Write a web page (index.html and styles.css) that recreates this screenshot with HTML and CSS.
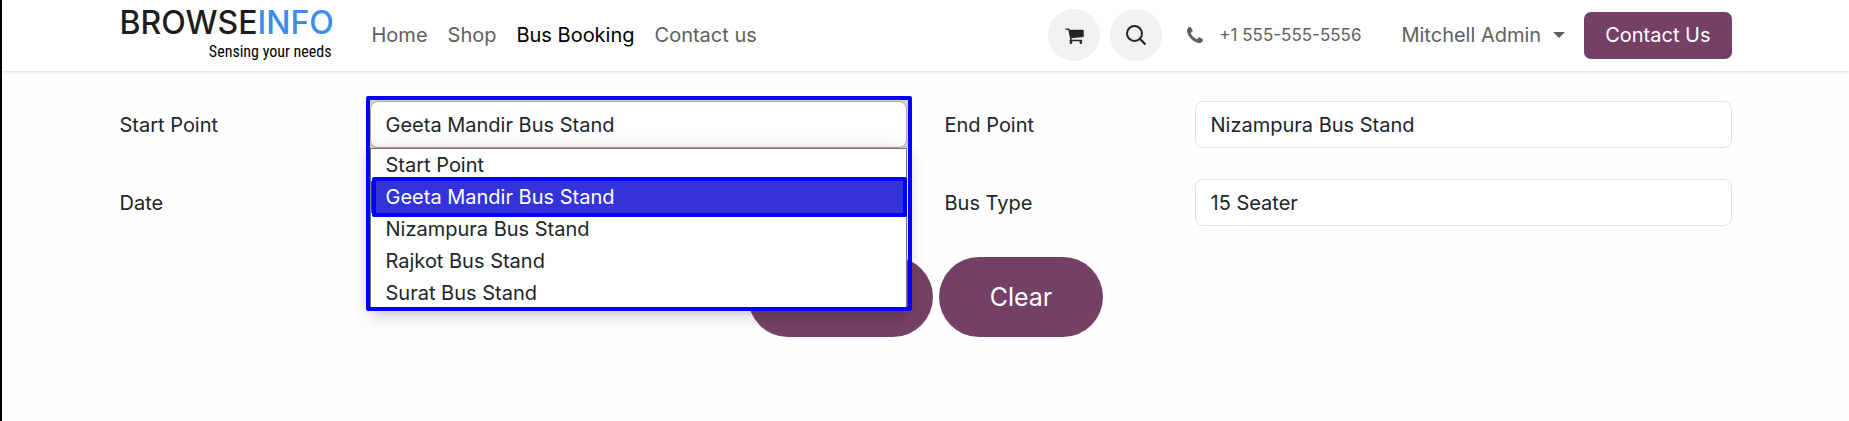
FILE: index.html
```html
<!DOCTYPE html>
<html lang="en">
<head>
<meta charset="utf-8">
<title>Bus Booking</title>
<meta name="viewport" content="width=device-width, initial-scale=1">
<link rel="stylesheet" href="styles.css">
</head>
<body class="page">
<header class="header">
  <div class="container header-row">
    <a class="logo" href="#">
      <span class="logo-name">BROWSE<span class="logo-accent">INFO</span></span>
      <span class="logo-tagline">Sensing your needs</span>
    </a>
    <nav class="nav">
      <a class="nav-link" href="#">Home</a>
      <a class="nav-link" href="#">Shop</a>
      <a class="nav-link active" href="#">Bus Booking</a>
      <a class="nav-link" href="#">Contact us</a>
    </nav>
    <div class="actions">
      <a class="round" href="#" aria-label="Cart">
        <svg class="icon-cart" viewBox="0 0 1664 1536"><path fill="currentColor" d="M640 1408a128 128 0 1 1-256 0a128 128 0 0 1 256 0zm896 0a128 128 0 1 1-256 0a128 128 0 0 1 256 0zm128-1088v512q0 24-16.500 42.500T1607 896L563 1018q13 60 13 70q0 16-24 64h920q26 0 45 19t19 45t-19 45t-45 19H448q-26 0-45-19t-19-45q0-11 8-31.500t16-36t21.500-40T445 1079L268 256H64q-26 0-45-19T0 192t19-45t45-19h256q16 0 28.500 6.500T368 150t13 24.500t8 26t5.500 29.500t4.500 26h1201q26 0 45 19t19 45z"/></svg>
      </a>
      <button class="round" type="button" aria-label="Search">
        <svg class="icon-search" viewBox="0 0 20 20" fill="none" stroke="currentColor" stroke-width="2"><circle cx="8.500" cy="8.500" r="7.500"/><path d="M13.500 13.500 19.500 19.500" stroke-width="2.200"/></svg>
      </button>
      <a class="phone" href="tel:+15555555556">
        <svg class="icon-phone" viewBox="0 0 1408 1408"><path fill="currentColor" d="M1408 1112q0 27-10 70.500t-21 68.500q-21 50-122 106q-94 51-186 51q-27 0-53-3.500t-57.500-12.500t-47-14.500t-55.500-20.500t-49-18q-98-35-175-83q-127-79-264-216T152 776q-48-77-83-175q-3-9-18-49t-20.500-55.500t-14.500-47T3.500 392T0 339q0-92 51-186Q107 52 157 31q25-11 68.500-21T296 0q14 0 21 3q18 6 53 76q11 19 30 54t35 63.500t31 53.500q3 4 17.500 25t21.500 35.500t7 28.500q0 20-28.500 50t-62 55t-62 53t-28.500 46q0 9 5 22.500t8.500 20.500t14 24t11.500 19q76 137 174 235t235 174q2 1 19 11.500t24 14t20.500 8.500t22.500 5q18 0 46-28.500t53-62t55-62t50-28.500q14 0 28.500 7t35.500 21.500t25 17.500q25 15 53.500 31t63.500 35t54 30q70 35 76 53q3 7 3 21z"/></svg>
        <span>+1 555-555-5556</span>
      </a>
      <button class="user" type="button">Mitchell Admin<span class="caret"></span></button>
      <a class="contact" href="#">Contact Us</a>
    </div>
  </div>
</header>
<main class="container">
  <form class="form">
    <div class="field">
      <label class="label" for="start">Start Point</label>
      <div class="combo">
        <select class="select focused" id="start"><option>Geeta Mandir Bus Stand</option></select>
        <div class="menu" role="listbox" aria-label="Start Point">
          <div class="option" role="option">Start Point</div>
          <div class="option selected" role="option" aria-selected="true">Geeta Mandir Bus Stand</div>
          <div class="option" role="option">Nizampura Bus Stand</div>
          <div class="option" role="option">Rajkot Bus Stand</div>
          <div class="option" role="option">Surat Bus Stand</div>
        </div>
      </div>
    </div>
    <div class="field">
      <label class="label" for="end">End Point</label>
      <select class="select" id="end"><option>Nizampura Bus Stand</option></select>
    </div>
    <div class="field">
      <label class="label" for="date">Date</label>
      <input class="select" id="date" type="text">
    </div>
    <div class="field">
      <label class="label" for="type">Bus Type</label>
      <select class="select" id="type"><option>15 Seater</option></select>
    </div>
    <div class="buttons">
      <button class="pill" type="button">Search</button>
      <button class="pill" type="button">Clear</button>
    </div>
  </form>
</main>
</body>
</html>
```
FILE: styles.css
```css
* { box-sizing: border-box; }

.page {
  margin: 0;
  min-height: 100vh;
  border-left: 2px solid #000;
  background: #fefefe;
  color: #212529;
  font: 20px/30px Inter, "Liberation Sans", sans-serif;
}

.container {
  width: 100%;
  max-width: 1650px;
  margin: 0 auto;
  padding: 0 19px;
}

.header {
  background: #fff;
  box-shadow: 0 1px 3px rgba(0, 0, 0, 0.14);
}

.header-row {
  display: flex;
  align-items: center;
  height: 71px;
  padding-bottom: 1px;
}

.logo {
  display: flex;
  flex-direction: column;
  width: 212px;
  color: #1d1d1b;
  text-decoration: none;
}

.logo-name {
  font-size: 32px;
  font-weight: 500;
  line-height: 34px;
}

.logo-accent { color: #3a8dea; }

.logo-tagline {
  align-self: flex-end;
  color: #000;
  font: 400 16px/24px "Roboto Condensed", "Open Sans Condensed Light", "Open Sans Condensed", "Liberation Sans", sans-serif;
}

.nav {
  display: flex;
  gap: 20px;
  margin-left: 40px;
}

.nav-link {
  color: #5f5f5f;
  text-decoration: none;
}

.nav-link.active { color: #000; }

.actions {
  display: flex;
  align-items: center;
  margin-left: auto;
}

.round {
  display: flex;
  align-items: center;
  justify-content: center;
  width: 52px;
  height: 52px;
  margin-right: 10px;
  padding: 0;
  border: 0;
  border-radius: 50%;
  background: #f1f1f1;
  color: #212529;
}

.icon-cart { width: 19px; height: 17px; }
.icon-search { width: 20px; height: 20px; }
.icon-phone { width: 16px; height: 16px; }

.phone {
  display: flex;
  align-items: center;
  gap: 16px;
  margin: 0 40px 0 15px;
  color: #5f5f5f;
  font-size: 17px;
  text-decoration: none;
}

.user {
  display: flex;
  align-items: center;
  gap: 12px;
  margin-right: 19px;
  padding: 0;
  border: 0;
  background: none;
  color: #5f5f5f;
  font: inherit;
}

.caret {
  border: 6px solid transparent;
  border-top-color: currentColor;
  border-bottom: 0;
}

.contact {
  padding: 8px 21px 9px;
  border-radius: 7px;
  background: #754065;
  color: #fff;
  text-decoration: none;
}

.form {
  display: grid;
  grid-template-columns: 1fr 1fr;
  gap: 31px 38px;
  padding-top: 30px;
}

.field {
  display: grid;
  grid-template-columns: 250px 1fr;
  align-items: center;
}

.select {
  display: block;
  width: 100%;
  height: 47px;
  padding: 0 15px;
  border: 1px solid #dee2e6;
  border-radius: 8px;
  appearance: none;
  background: #fff;
  color: #212529;
  font: inherit;
}

.combo { position: relative; }

/* Highlight frame around the field and its open list */
.combo::after {
  content: "";
  position: absolute;
  z-index: 2;
  inset: -5px -5px -163px -4px;
  border: 4px solid #00f;
  border-radius: 2px;
  pointer-events: none;
}

.focused {
  border-color: #ba9fb2;
  box-shadow: 0 0 0 4px rgba(117, 64, 101, 0.25);
}

.menu {
  position: absolute;
  z-index: 1;
  top: 100%;
  left: 0;
  right: 0;
  border: 1px solid #767676;
  background: #fff;
  box-shadow: 0 4px 16px rgba(0, 0, 0, 0.25);
}

.option {
  padding: 1px 15px;
}

.selected {
  position: relative;
  background: #3333d8;
  color: #fff;
}

.selected::after {
  content: "";
  position: absolute;
  inset: -4px -1px -4px 1px;
  border: 4px solid #00f;
  border-radius: 2px;
}

.buttons {
  display: flex;
  grid-column: 1 / -1;
  justify-content: center;
  gap: 6px;
}

.pill {
  height: 80px;
  padding: 0 51px;
  border: 0;
  border-radius: 40px;
  background: #754065;
  color: #fff;
  font: 25px/36px Inter, "Liberation Sans", sans-serif;
}
```
